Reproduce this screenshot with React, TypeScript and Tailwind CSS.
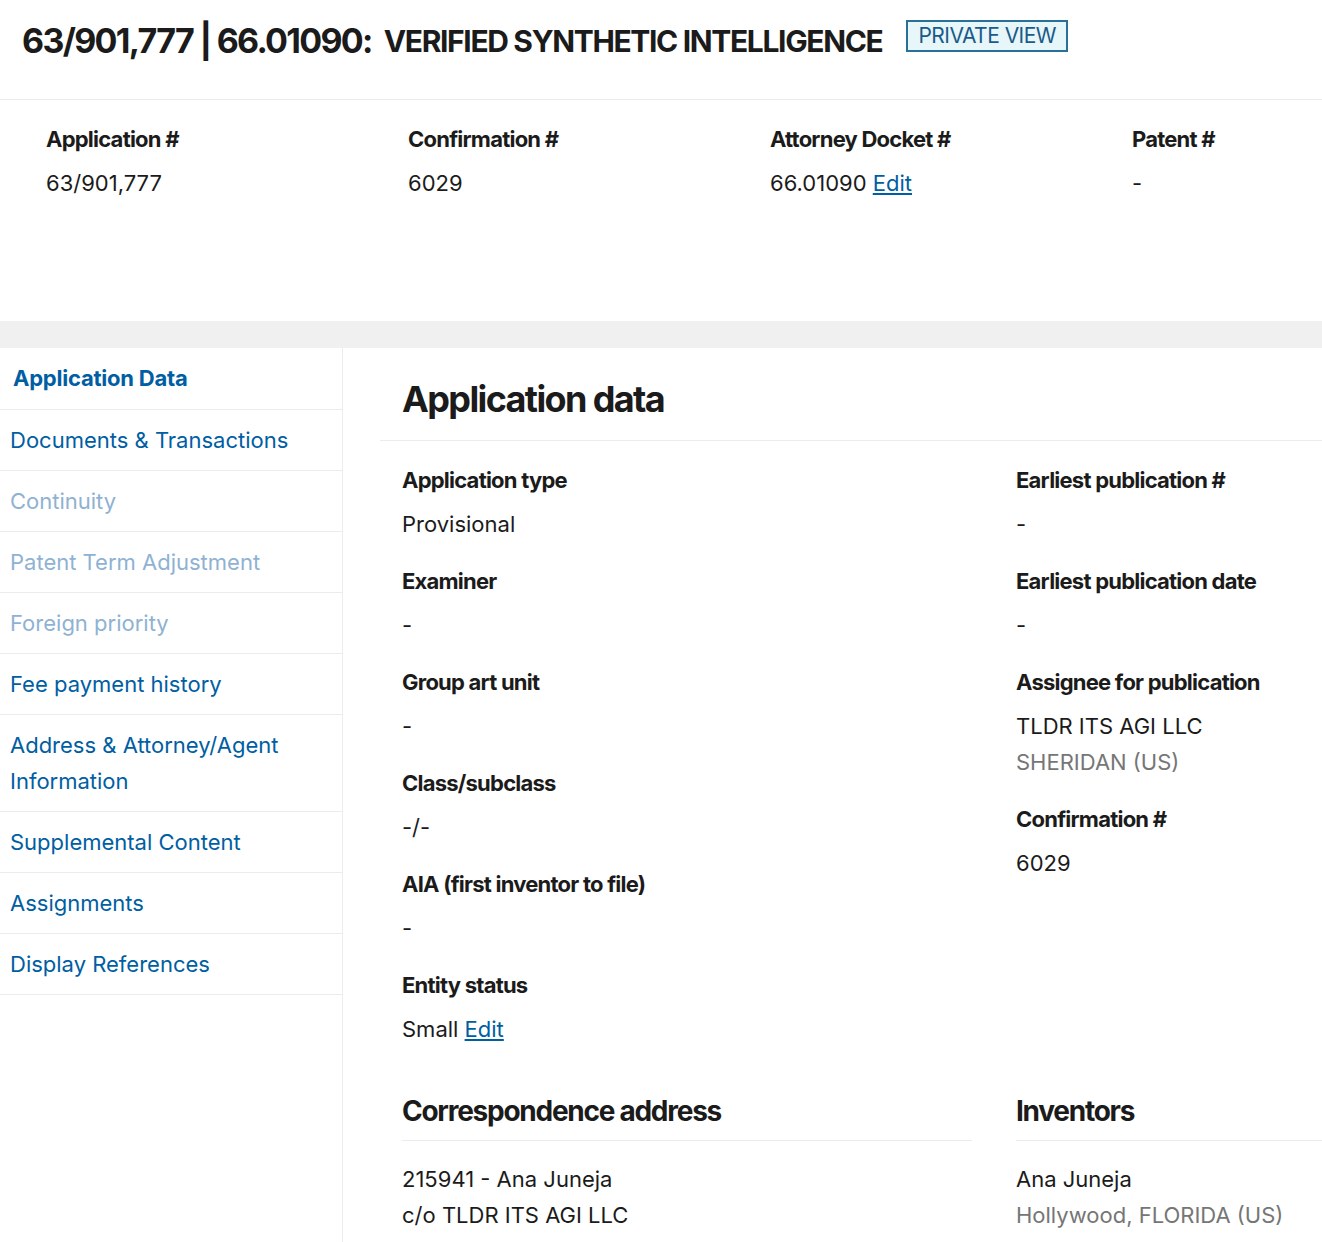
const F = { fontFamily: "Inter, 'Liberation Sans', sans-serif" };

function Field({ label, children }: { label: string; children: React.ReactNode }) {
  return (
    <div className="h-[101px]">
      <div className="text-[22px] font-bold tracking-[-0.035em] text-[#1b1b1b] leading-[30px]">{label}</div>
      <div className="mt-[14px] text-[22px] text-[#1b1b1b] leading-[30px]">{children}</div>
    </div>
  );
}

const Edit = () => <a className="text-[#005ea2] underline">Edit</a>;

const nav: [string, boolean][] = [
  ["Documents & Transactions", true],
  ["Continuity", false],
  ["Patent Term Adjustment", false],
  ["Foreign priority", false],
  ["Fee payment history", true],
  ["Address & Attorney/Agent Information", true],
  ["Supplemental Content", true],
  ["Assignments", true],
  ["Display References", true],
];

export default function App() {
  return (
    <div style={F} className="w-[1322px] h-[1242px] overflow-hidden bg-white text-[#1b1b1b]">
      <div className="h-[100px] border-b border-[#ececec] flex items-start pt-[18px] pl-[22px]">
        <span className="text-[34px] font-bold tracking-[-0.05em] leading-[46px]">63/901,777 | 66.01090:</span>
        <span className="ml-[12px] text-[30px] font-bold tracking-[-0.045em] leading-[46px]">VERIFIED SYNTHETIC INTELLIGENCE</span>
        <span className="ml-[24px] mt-[2px] border-2 border-[#2a6f97] bg-[#e7f6f8] text-[#1a5a8a] text-[21px] px-[10px] leading-[28px] tracking-tight">PRIVATE VIEW</span>
      </div>
      <div className="h-[221px] grid grid-cols-[362px_362px_362px_1fr] pl-[46px] pt-[24px]">
        <Field label="Application #">63/901,777</Field>
        <Field label="Confirmation #">6029</Field>
        <Field label="Attorney Docket #"><>66.01090 <Edit /></></Field>
        <Field label="Patent #">-</Field>
      </div>
      <div className="h-[27px] bg-[#f0f0f0]" />
      <div className="flex">
        <div className="w-[343px] border-r border-[#ececec] h-[900px] shrink-0">
          <div className="h-[62px] border-b border-[#ececec] pl-[13px] flex items-center text-[22px] font-bold text-[#005ea2] tracking-[-0.01em]">Application Data</div>
          {nav.map(([t, on]) => (
            <div key={t} className={`border-b border-[#ececec] pl-[10px] pr-4 py-[12px] text-[22px] leading-[36px] ${on ? "text-[#005ea2]" : "text-[#8fb2d2]"}`}>{t}</div>
          ))}
        </div>
        <div className="flex-1 pl-[37px]">
          <div className="h-[93px] border-b border-[#ececec] pl-[22px] pt-[28px] text-[36px] font-bold tracking-[-0.045em] leading-[46px]">Application data</div>
          <div className="pl-[22px] pt-[24px] grid grid-cols-[614px_1fr]">
            <div>
              <Field label="Application type">Provisional</Field>
              <Field label="Examiner">-</Field>
              <Field label="Group art unit">-</Field>
              <Field label="Class/subclass">-/-</Field>
              <Field label="AIA (first inventor to file)">-</Field>
              <Field label="Entity status"><>Small <Edit /></></Field>
            </div>
            <div>
              <Field label="Earliest publication #">-</Field>
              <Field label="Earliest publication date">-</Field>
              <div className="h-[137px]">
                <div className="text-[22px] font-bold tracking-[-0.035em] leading-[30px]">Assignee for publication</div>
                <div className="mt-[11px] text-[22px] leading-[36px]">TLDR ITS AGI LLC</div>
                <div className="text-[22px] leading-[36px] text-[#767676]">SHERIDAN (US)</div>
              </div>
              <Field label="Confirmation #">6029</Field>
            </div>
          </div>
          <div className="pl-[22px] mt-[20px] grid grid-cols-[614px_1fr]">
            <div className="pr-[44px]">
              <div className="h-[50px] border-b border-[#ececec] text-[28px] font-bold tracking-[-0.045em] leading-[40px]">Correspondence address</div>
              <div className="pt-[20px] text-[22px] leading-[36px]">
                <div>215941 - Ana Juneja</div>
                <div>c/o TLDR ITS AGI LLC</div>
                <div>401 Wall St</div>
              </div>
            </div>
            <div>
              <div className="h-[50px] border-b border-[#ececec] text-[28px] font-bold tracking-[-0.045em] leading-[40px]">Inventors</div>
              <div className="pt-[20px] text-[22px] leading-[36px]">
                <div>Ana Juneja</div>
                <div className="text-[#767676]">Hollywood, FLORIDA (US)</div>
              </div>
            </div>
          </div>
        </div>
      </div>
    </div>
  );
}
